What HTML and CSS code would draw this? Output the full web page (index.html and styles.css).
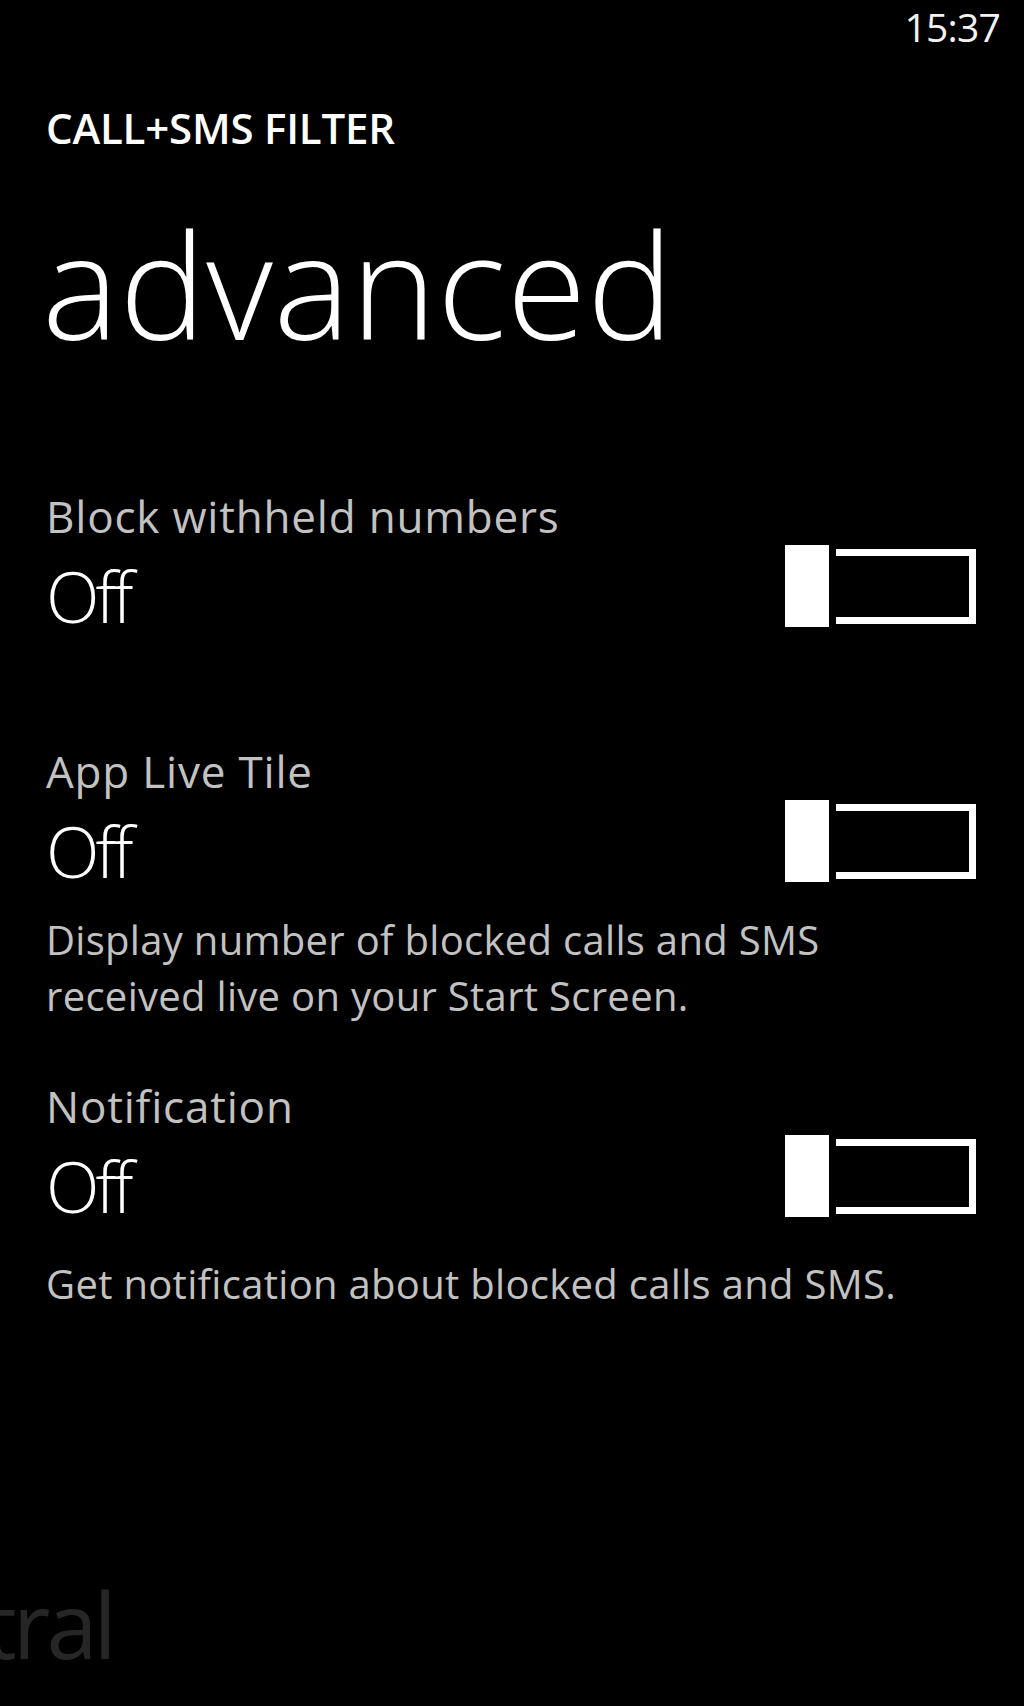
FILE: index.html
```html
<!DOCTYPE html>
<html lang="en">
<head>
<meta charset="utf-8">
<title>advanced</title>
<link rel="stylesheet" href="styles.css">
</head>
<body>
<div class="screen">
  <div class="status-bar"><span class="time">15:37</span></div>
  <header class="header">
    <div class="app-title">CALL+SMS FILTER</div>
    <h1 class="page-title">advanced</h1>
  </header>
  <main class="settings">
    <section class="setting s1">
      <div class="setting-head">
        <div class="setting-text">
          <div class="label">Block withheld numbers</div>
          <div class="value">Off</div>
        </div>
        <div class="toggle"><span class="thumb"></span><span class="track"></span></div>
      </div>
    </section>
    <section class="setting s2">
      <div class="setting-head">
        <div class="setting-text">
          <div class="label">App Live Tile</div>
          <div class="value">Off</div>
        </div>
        <div class="toggle"><span class="thumb"></span><span class="track"></span></div>
      </div>
      <p class="desc d2">Display number of blocked calls and SMS<br>received live on your Start Screen.</p>
    </section>
    <section class="setting s3">
      <div class="setting-head">
        <div class="setting-text">
          <div class="label">Notification</div>
          <div class="value">Off</div>
        </div>
        <div class="toggle"><span class="thumb"></span><span class="track"></span></div>
      </div>
      <p class="desc d3">Get notification about blocked calls and SMS.</p>
    </section>
  </main>
  <div class="watermark">tral</div>
</div>
</body>
</html>
```
FILE: styles.css
```css
html, body {
  margin: 0;
  padding: 0;
  background: #000;
}
.screen {
  position: relative;
  width: 1024px;
  height: 1706px;
  overflow: hidden;
  background: #000;
  color: #fff;
  font-family: "Open Sans", "Noto Sans", sans-serif;
}
.status-bar {
  height: 68px;
  display: flex;
  justify-content: flex-end;
  align-items: flex-start;
  padding-right: 24px;
}
.time {
  font-size: 39px;
  line-height: 53px;
  letter-spacing: -0.8px;
  color: #f2f2f2;
}
.header {
  padding-left: 46px;
}
.app-title {
  margin-top: 35px;
  font-size: 42px;
  line-height: 50px;
  font-weight: 600;
  letter-spacing: -0.2px;
}
.page-title {
  margin: 51px 0 0 -4px;
  font-size: 145px;
  line-height: 160px;
  font-weight: 300;
  letter-spacing: 0.6px;
}
.settings {
  padding: 0 48px 0 46px;
}
.setting-head {
  display: flex;
  justify-content: space-between;
  align-items: flex-start;
}
.s1 { margin-top: 127px; }
.s2 { margin-top: 110px; }
.s3 { margin-top: 57px; }
.label {
  font-size: 44px;
  line-height: 50px;
  color: #c2c2c2;
  letter-spacing: 0.8px;
}
.value {
  margin-top: 15px;
  font-size: 70px;
  line-height: 80px;
  font-weight: 300;
  letter-spacing: -4px;
  color: #fff;
}
.toggle {
  display: flex;
  align-items: center;
  margin-top: 54px;
}
.thumb {
  width: 44px;
  height: 82px;
  background: #fff;
}
.track {
  box-sizing: border-box;
  width: 140px;
  height: 75px;
  margin-left: 7px;
  border: 7px solid #fff;
  border-left: none;
}
.desc {
  margin: 0;
  font-size: 40px;
  line-height: 56px;
  color: #c2c2c2;
  letter-spacing: 0.3px;
}
.d2 { margin-top: 21px; }
.d3 { margin-top: 30px; }
.watermark {
  position: absolute;
  left: -16px;
  top: 1559px;
  font-size: 92px;
  line-height: 130px;
  color: #262626;
  letter-spacing: -4px;
}
```
